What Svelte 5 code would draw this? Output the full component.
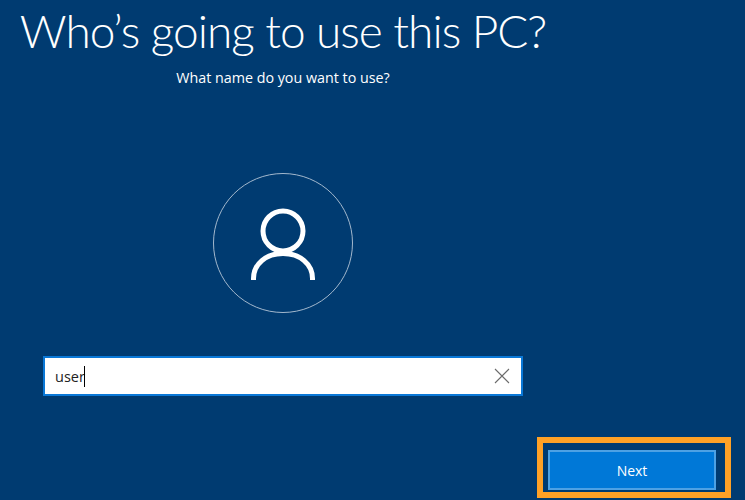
<script lang="ts">
  let name = 'user';
</script>

<div class="page">
  <main class="content">
    <h1>Who’s going to use this PC?</h1>
    <p class="sub">What name do you want to use?</p>
    <div class="avatar">
      <svg width="70" height="78" viewBox="0 0 70 78" fill="none" stroke="#fff" stroke-width="5">
        <circle cx="35" cy="25" r="20" />
        <path d="M5.5 74v-1.500C5.500 58 18 47.500 35 47.500S64.500 58 64.500 72.500V74" />
      </svg>
    </div>
    <div class="field">
      <span class="value">{name}</span><span class="caret"></span>
      <svg class="clear" width="16" height="16" viewBox="0 0 16 16" stroke="#6b6b6b" stroke-width="1.100">
        <path d="M1 1l14 14M15 1L1 15" />
      </svg>
    </div>
  </main>
  <footer class="actions">
    <div class="highlight">
      <button type="button">Next</button>
    </div>
  </footer>
</div>

<style>
  :global(body) {
    margin: 0;
    background: #003b71;
  }

  .page {
    width: 745px;
    height: 500px;
    overflow: hidden;
    display: flex;
    flex-direction: column;
    background: #003b71;
    color: #fff;
    font-family: "Open Sans", "Liberation Sans", sans-serif;
  }

  .content {
    width: 566px;
    display: flex;
    flex-direction: column;
    align-items: center;
  }

  h1 {
    margin: 1px 0 0;
    font-family: Lato, "Open Sans", sans-serif;
    font-size: 46px;
    font-weight: 300;
    letter-spacing: -1px;
    line-height: 60px;
    white-space: nowrap;
  }

  .sub {
    margin: 7px 0 0;
    font-size: 14.300px;
    line-height: 20px;
  }

  .avatar {
    box-sizing: border-box;
    width: 140px;
    height: 140px;
    margin-top: 85px;
    border: 1px solid #a3b8cd;
    border-radius: 50%;
    display: flex;
    justify-content: center;
    padding-top: 32px;
  }

  .field {
    box-sizing: border-box;
    width: 480px;
    height: 40px;
    margin-top: 43px;
    border: 2px solid #0a78d7;
    background: #fff;
    color: #222;
    display: flex;
    align-items: center;
    padding: 0 11px 0 10px;
    font-size: 14.500px;
  }

  .caret {
    width: 1px;
    height: 21px;
    margin-left: -1px;
    background: #000;
  }

  .clear {
    margin-left: auto;
  }

  .actions {
    margin-top: auto;
    display: flex;
    justify-content: flex-end;
    padding: 0 14px 2px 0;
  }

  .highlight {
    box-sizing: border-box;
    width: 194px;
    height: 61px;
    border: 6px solid #ffa126;
    padding: 7px 9px 2px 5px;
  }

  button {
    box-sizing: border-box;
    width: 100%;
    height: 40px;
    background: #0078d7;
    border: 2px solid #4da1e4;
    color: #fff;
    font: inherit;
    font-size: 14px;
    padding: 0;
  }
</style>
